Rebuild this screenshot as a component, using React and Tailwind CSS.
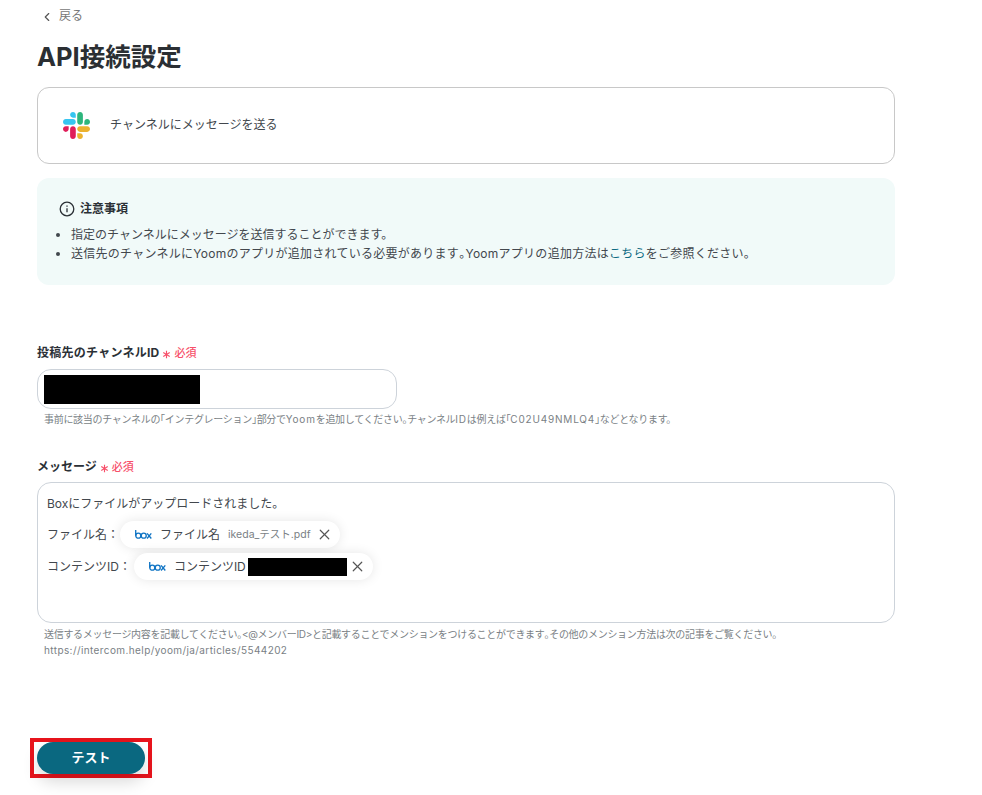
import React from 'react';
import { ChevronLeft, X } from 'lucide-react';

const font = "font-['Inter','Noto_Sans_CJK_JP',sans-serif]";

// half width brackets and stops, the way the page renders them
const H = ({ children }) => <span className="[font-feature-settings:'halt']">{children}</span>;
// latin runs in the small print are spaced wider than the kana
const L = ({ children }) => <span className="tracking-[0.08em]">{children}</span>;

const SlackLogo = () => (
  <svg width="27" height="27" viewBox="0 0 122.8 122.8">
    <path d="M25.8 77.6c0 7.1-5.8 12.9-12.9 12.9S0 84.7 0 77.6s5.8-12.9 12.9-12.9h12.9v12.9zm6.5 0c0-7.1 5.8-12.9 12.9-12.9s12.9 5.8 12.9 12.9v32.3c0 7.1-5.8 12.9-12.9 12.9s-12.9-5.8-12.9-12.9V77.6z" fill="#e01e5a" />
    <path d="M45.2 25.8c-7.1 0-12.9-5.8-12.9-12.9S38.1 0 45.2 0s12.9 5.8 12.9 12.9v12.9H45.2zm0 6.5c7.1 0 12.9 5.8 12.9 12.9s-5.8 12.9-12.9 12.9H12.9C5.8 58.1 0 52.3 0 45.2s5.8-12.9 12.9-12.9h32.3z" fill="#36c5f0" />
    <path d="M97 45.2c0-7.1 5.8-12.9 12.9-12.9s12.9 5.8 12.9 12.9-5.8 12.9-12.9 12.9H97V45.2zm-6.5 0c0 7.1-5.8 12.9-12.9 12.9s-12.9-5.8-12.9-12.9V12.9C64.7 5.8 70.5 0 77.6 0s12.9 5.8 12.9 12.9v32.3z" fill="#2eb67d" />
    <path d="M77.6 97c7.1 0 12.9 5.8 12.9 12.9s-5.8 12.9-12.9 12.9-12.9-5.8-12.9-12.9V97h12.9zm0-6.5c-7.1 0-12.9-5.8-12.9-12.9s5.8-12.9 12.9-12.9h32.3c7.1 0 12.9 5.8 12.9 12.9s-5.8 12.9-12.9 12.9H77.6z" fill="#ecb22e" />
  </svg>
);

const BoxLogo = () => (
  <svg width="17" height="9" viewBox="0 0 36 19" fill="none" stroke="#0f74c4" strokeWidth="2.8">
    <path d="M1.5 0v12" />
    <circle cx="7" cy="12" r="5.3" />
    <circle cx="18.5" cy="12" r="5.3" />
    <path d="M25.5 7l9 11M34.5 7l-9 11" />
  </svg>
);

const Required = () => (
  <span className="ml-[3px] flex items-center text-[11px] font-medium tracking-normal text-[#f7506a]">
    <svg width="9" height="9" viewBox="0 0 10 10" className="mr-[3px] mt-[2px]" stroke="#f7506a" strokeWidth="1.3">
      <path d="M5 .8v8.4M1.4 2.9l7.2 4.2M8.6 2.9L1.4 7.1" />
    </svg>
    必須
  </span>
);

const Chip = ({ label, children }) => (
  <span className="flex h-[27px] items-center rounded-full bg-white pl-[15px] pr-[7px] shadow-[0_0_12px_rgba(0,0,0,0.1)]">
    <BoxLogo />
    <span className="ml-[8px] text-[12px] text-[#42474d]">{label}</span>
    {children}
    <X size={17} strokeWidth={1.7} className="ml-[5px] text-[#555]" />
  </span>
);

export default function App() {
  return (
    <div className={`${font} min-h-[795px] bg-white pl-[37px] text-[#2b3036]`}>
      <div className="w-[858px]">
        <div className="flex h-[32px] items-center pl-[3px] text-[12px] text-[#777]">
          <ChevronLeft size={14} strokeWidth={2} className="mr-[5px] mt-[1px] text-[#555]" />
          <span>戻る</span>
        </div>

        <h1 className="mt-[7px] text-[25.5px] leading-[36px] font-bold text-[#2b2f33]">API接続設定</h1>

        <div className="mt-[12px] flex h-[77px] items-center rounded-xl border border-[#c8c8c8] pl-[25px]">
          <SlackLogo />
          <span className="mb-[1px] ml-[20px] text-[12px] text-[#42474d]">チャンネルにメッセージを送る</span>
        </div>

        <div className="mt-[14px] h-[107px] rounded-xl bg-[#f1faf9] pl-[22px] pt-[22px]">
          <div className="flex items-center text-[12px] font-bold leading-[18px]">
            <svg width="16" height="16" viewBox="0 0 16 16" fill="none" stroke="#2b3036" strokeWidth="1.3" className="mr-[5px]">
              <circle cx="8" cy="8" r="6.8" />
              <path d="M8 7.2v4M8 4.4v1.4" />
            </svg>
            注意事項
          </div>
          <ul className="mt-[7px] list-disc pl-[12px] text-[12px] leading-[19px] text-[#42474d]">
            <li>指定のチャンネルにメッセージを送信することができます。</li>
            <li className="tracking-[0.022em]">
              送信先のチャンネルにYoomのアプリが追加されている必要があります<H>。</H>Yoomアプリの追加方法は
              <span className="text-[#0d6a82]">こちら</span>をご参照ください。
            </li>
          </ul>
        </div>

        <div className="mt-[59px] flex h-[18px] items-center text-[12px] font-bold tracking-[0.25px]">
          投稿先のチャンネルID
          <Required />
        </div>
        <div className="mt-[7px] flex h-[40px] w-[360px] items-center rounded-[14px] border border-[#cdd3da] pl-[6px]">
          <div className="h-[29px] w-[156px] bg-black" />
        </div>
        <p className="mt-[2px] pl-[7px] text-[10px] leading-[16px] tracking-[-0.03em] text-[#7a7f85]">
          事前に該当のチャンネルの<H>「</H>インテグレーション<H>」</H>部分で<L>Yoom</L>を追加してください<H>。</H>チャンネル<L>ID</L>は例えば<H>「</H><L>C02U49NMLQ4</L><H>」</H>などとなります。
        </p>

        <div className="mt-[31px] flex h-[18px] items-center text-[12px] font-bold">
          メッセージ
          <Required />
        </div>
        <div className="mt-[6px] h-[141px] rounded-[14px] border border-[#cdd3da] pl-[9px] pt-[12px] text-[12px] text-[#42474d]">
          <p className="leading-[18px]">Boxにファイルがアップロードされました。</p>
          <div className="mt-[8px] flex items-center">
            <span className="mr-[1px]">ファイル名：</span>
            <Chip label="ファイル名">
              <span className="ml-[8px] text-[10.5px] text-[#7a7f85]">ikeda_テスト.pdf</span>
            </Chip>
          </div>
          <div className="mt-[5px] flex items-center">
            <span className="mr-[3px]">コンテンツID：</span>
            <Chip label="コンテンツID">
              <span className="-mr-[3px] ml-[2px] h-[18px] w-[99px] bg-black" />
            </Chip>
          </div>
        </div>
        <p className="mt-[3px] pl-[7px] text-[10px] leading-[16px] text-[#7a7f85]">
          <span className="tracking-[-0.03em]">送信するメッセージ内容を記載してください<H>。</H>&lt;@メンバーID&gt;と記載することでメンションをつけることができます<H>。</H>その他のメンション方法は次の記事をご覧ください。</span>
          <br />
          <span className="tracking-[0.04em]">https://intercom.help/yoom/ja/articles/5544202</span>
        </p>

        <div className="mt-[80px] -ml-[7px] w-[122px] border-[4px] border-[#e8141c] px-[3px]">
          <button className="flex h-[32px] w-full items-center justify-center rounded-full bg-[#0a6880] text-[13px] font-bold text-white shadow-[0_8px_16px_rgba(0,0,0,0.15)]">
            テスト
          </button>
        </div>
      </div>
    </div>
  );
}
